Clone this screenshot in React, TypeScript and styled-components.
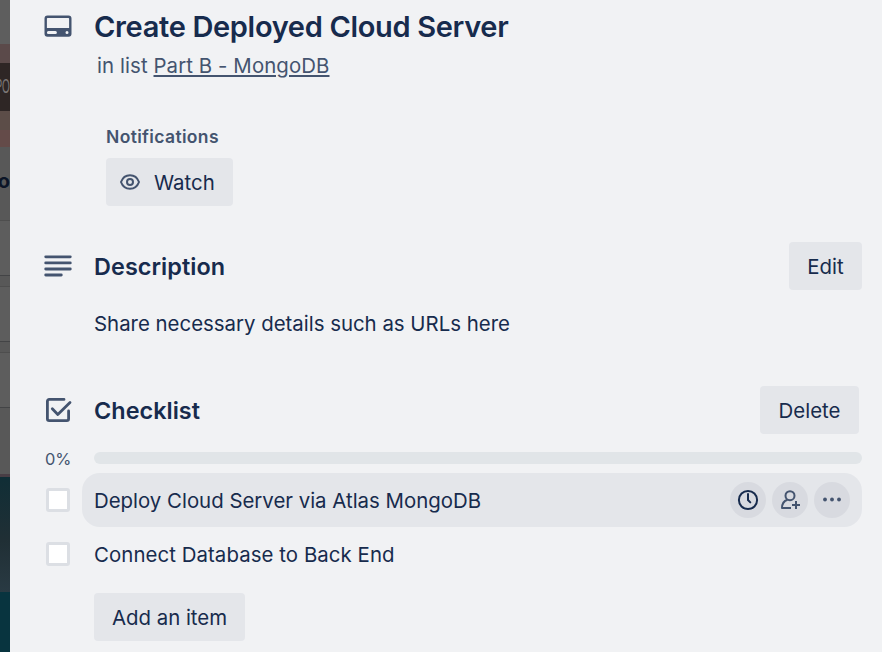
import React from 'react';
import styled, { createGlobalStyle } from 'styled-components';

const Global = createGlobalStyle`
  * { box-sizing: border-box; }
  body { margin: 0; background: #f1f2f4; font-family: Inter, 'Liberation Sans', sans-serif; overflow: hidden; }
  h1, h2, h3, p, ul { margin: 0; padding: 0; }
  button { font: inherit; border: 0; padding: 0; }
`;

const Screen = styled.div`
  display: grid;
  grid-template-columns: 10px 1fr;
  height: 652px;
  overflow: hidden;
  color: #172b4d;
`;

const Backdrop = styled.div`
  display: flex;
  flex-direction: column;
  overflow: hidden;
`;

const Band = styled.div<{ $h: number; $bg: string }>`
  flex: none;
  display: flex;
  align-items: center;
  justify-content: flex-end;
  height: ${p => p.$h}px;
  background: ${p => p.$bg};
`;

const CoverText = styled.span`
  font: 400 20px/20px 'Liberation Sans', sans-serif;
  color: #7b7776;
  flex: none;
  padding-bottom: 2px;
  transform: scaleX(0.5);
  transform-origin: right;
`;

const ListText = styled.span`
  flex: none;
  padding-top: 15px;
  font-size: 20px;
  font-weight: 700;
  line-height: 24px;
  color: #0b1426;
`;

const Dialog = styled.main`
  display: flex;
  flex-direction: column;
  padding: 0 20px 0 34px;
  background: #f1f2f4;
`;

const Row = styled.div<{ $h: number; $mt?: number }>`
  flex: none;
  display: grid;
  grid-template-columns: 50px 1fr auto;
  align-items: center;
  height: ${p => p.$h}px;
  margin-top: ${p => p.$mt ?? 0}px;
`;

const Text = styled.span<{ $size: number; $ls?: number; $weight?: number; $muted?: boolean; $pt?: number; $pl?: number }>`
  padding: ${p => p.$pt ?? 0}px 0 0 ${p => p.$pl ?? 0}px;
  font-size: ${p => p.$size}px;
  letter-spacing: ${p => p.$ls ?? 0}px;
  font-weight: ${p => p.$weight ?? 400};
  color: ${p => (p.$muted ? '#44546f' : '#172b4d')};
  line-height: 1.2;
  white-space: nowrap;
`;

const ListLine = styled.p`
  flex: none;
  height: 28px;
  line-height: 28px;
  margin: -2px 0 0 53px;
  font-size: 20.4px;
  letter-spacing: 0.09px;
  color: #44546f;
`;

const ListLink = styled.a`
  text-decoration: underline;
  text-decoration-thickness: 2px;
  text-underline-offset: 2px;
`;

const Notifications = styled.section`
  flex: none;
  display: flex;
  flex-direction: column;
  align-items: flex-start;
  height: 81px;
  margin: 45px 0 0 62px;
`;

const Label = styled.h3`
  height: 33px;
  line-height: 24px;
  font-size: 17.5px;
  font-weight: 600;
  letter-spacing: 0.35px;
  color: #44546f;
`;

const Button = styled.button<{ $w: number; $mr?: number }>`
  display: flex;
  flex: none;
  align-items: center;
  justify-content: center;
  width: ${p => p.$w}px;
  height: 48px;
  margin-right: ${p => p.$mr ?? 0}px;
  border-radius: 4px;
  background: #e4e6ea;
  color: #172b4d;
  font-size: 20.4px;
  line-height: 26px;
  padding-top: 2px;
`;

const WatchButton = styled(Button)`
  justify-content: flex-start;
  gap: 13px;
  padding-left: 13px;
  svg { margin-top: -3px; }
`;

const Progress = styled.div`
  grid-column: 2 / 4;
  height: 12px;
  border-radius: 6px;
  background: #e1e5e8;
`;

const Checkbox = styled.span`
  width: 24px;
  height: 24px;
  margin-left: 2px;
  border: 3px solid #dcdfe4;
  border-radius: 3px;
  background: #fff;
`;

const Item = styled.div<{ $active?: boolean }>`
  grid-column: 2 / 4;
  display: flex;
  align-items: center;
  justify-content: space-between;
  height: 54px;
  margin-left: -12px;
  padding: 0 12px;
  border-radius: 18px;
  background: ${p => (p.$active ? '#e4e6ea' : 'transparent')};
`;

const Actions = styled.div`
  display: flex;
  gap: 6px;
`;

const Round = styled.span`
  display: grid;
  place-items: center;
  width: 36px;
  height: 36px;
  border-radius: 50%;
  background: #d8dae0;
`;

const Footer = styled.div`
  flex: none;
  margin: 12px 0 0 50px;
`;

const CardIcon = () => (
  <svg width="28" height="28" viewBox="0 0 28 28">
    <path fillRule="evenodd" fill="#44546f" d="M3.500 2.600h21a3 3 0 0 1 3 3v15.200a3 3 0 0 1-3 3h-21a3 3 0 0 1-3-3V5.600a3 3 0 0 1 3-3zM2.900 5.800v9.300h22.200V5.800a.7.7 0 0 0-.7-.7H3.600a.7.7 0 0 0-.7.7zM4.400 17.900a1.500 1.500 0 0 0 0 3h7a1.500 1.500 0 0 0 0-3zM23 17.900a1.500 1.500 0 1 0 0 3 1.500 1.500 0 0 0 0-3z" />
  </svg>
);

const LinesIcon = () => (
  <svg width="28" height="28" viewBox="0 0 28 28" stroke="#44546f" strokeWidth="2.8" strokeLinecap="round">
    <path d="M1.700 4.800h24.600M1.700 10.900h24.600M1.700 17h24.600M1.700 23h15.600" />
  </svg>
);

const CheckIcon = () => (
  <svg width="28" height="28" viewBox="0 0 28 28" fill="none" stroke="#44546f" strokeWidth="2.8" strokeLinecap="round" strokeLinejoin="round">
    <path d="M20 3.400H5.200a1.800 1.800 0 0 0-1.800 1.800v17.600a1.800 1.800 0 0 0 1.800 1.800h17.600a1.800 1.800 0 0 0 1.800-1.800V15" />
    <path d="M8.300 12.800l5.500 5.700L26 6.600" />
  </svg>
);

const EyeIcon = () => (
  <svg width="22" height="20" viewBox="0 0 22 20" fill="none" stroke="#44546f" strokeWidth="2">
    <path d="M2 10C3.700 5.300 7 3.200 11 3.200S18.300 5.300 20 10C18.300 14.700 15 16.800 11 16.800S3.700 14.700 2 10z" strokeLinejoin="round" />
    <circle cx="11" cy="10" r="3" />
  </svg>
);

const ClockIcon = () => (
  <svg width="24" height="24" viewBox="0 0 24 24" fill="none" stroke="#172b4d" strokeWidth="2" strokeLinecap="round">
    <circle cx="12" cy="12" r="9.100" />
    <path d="M12 6v6l2.300 2.400" />
  </svg>
);

const MemberIcon = () => (
  <svg width="24" height="24" viewBox="0 0 24 24" fill="none" stroke="#44546f" strokeWidth="2">
    <circle cx="12" cy="7.700" r="4.500" />
    <path d="M9.500 11.700C6 12.900 4 15.600 4 20h9" strokeLinejoin="round" />
    <path d="M18 13v8M14 17h8" />
  </svg>
);

const DotsIcon = () => (
  <svg width="24" height="24" viewBox="0 0 24 24" fill="#44546f">
    <circle cx="5" cy="11.500" r="1.900" /><circle cx="12" cy="11.500" r="1.900" /><circle cx="19" cy="11.500" r="1.900" />
  </svg>
);

const lowerBands: [number, string][] = [
  [20, '#585858'], [1, '#4e4e4e'], [54, '#5d5d5d'], [1, '#434446'], [10, '#585858'],
  [1, '#4e4e4e'], [54, '#5d5d5d'], [1, '#434446'], [10, '#585858'],
  [1, '#4e4e4e'], [54, '#5d5d5d'], [1, '#434446'], [66, '#585858'],
  [3, '#493e45'], [115, 'linear-gradient(#102e36, #202f35 55%, #293a43)'], [60, '#08343f'],
];

export default function App() {
  return (
    <Screen>
      <Global />
      <Backdrop>
        <Band $h={44} $bg="#5e5e5e" />
        <Band $h={19} $bg="#5b4a4a" />
        <Band $h={48} $bg="#2e2625"><CoverText>PO</CoverText></Band>
        <Band $h={19} $bg="#5c4d48" />
        <Band $h={17} $bg="#644b49" />
        <Band $h={53} $bg="#585858"><ListText>o</ListText></Band>
        {lowerBands.map(([h, bg], i) => <Band key={i} $h={h} $bg={bg} />)}
      </Backdrop>
      <Dialog>
        <Row $h={54}>
          <CardIcon />
          <Text as="h1" $size={29} $weight={600} $ls={-0.33}>Create Deployed Cloud Server</Text>
        </Row>
        <ListLine>in list <ListLink>Part B - MongoDB</ListLink></ListLine>
        <Notifications>
          <Label>Notifications</Label>
          <WatchButton $w={127}><EyeIcon />Watch</WatchButton>
        </Notifications>
        <Row $h={48} $mt={36}>
          <LinesIcon />
          <Text as="h2" $size={23.4} $weight={600} $ls={0.08} $pt={2}>Description</Text>
          <Button $w={73}>Edit</Button>
        </Row>
        <Row $h={28} $mt={20}>
          <span />
          <Text as="p" $size={20.4}>Share necessary details such as URLs here</Text>
        </Row>
        <Row $h={48} $mt={48}>
          <CheckIcon />
          <Text as="h2" $size={23.4} $weight={600} $ls={0.04} $pt={2}>Checklist</Text>
          <Button $w={99} $mr={3}>Delete</Button>
        </Row>
        <Row $h={24} $mt={12}>
          <Text $size={16.400} $muted $pt={3} $pl={1}>0%</Text>
          <Progress />
        </Row>
        <Row $h={54} $mt={3}>
          <Checkbox />
          <Item $active>
            <Text $size={20.4} $pt={2}>Deploy Cloud Server via Atlas MongoDB</Text>
            <Actions>
              <Round><ClockIcon /></Round>
              <Round><MemberIcon /></Round>
              <Round><DotsIcon /></Round>
            </Actions>
          </Item>
        </Row>
        <Row $h={54}>
          <Checkbox />
          <Item><Text $size={20.4} $ls={0.07} $pt={2}>Connect Database to Back End</Text></Item>
        </Row>
        <Footer><Button $w={151}>Add an item</Button></Footer>
      </Dialog>
    </Screen>
  );
}
